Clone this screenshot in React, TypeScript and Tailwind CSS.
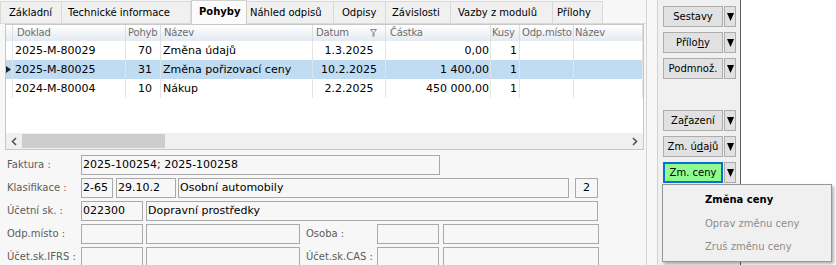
import React from "react";

type Col = { w: number; h?: string; hpl: number; align: "left" | "right" | "center"; pl?: number; pr?: number; key?: string };

const cols: Col[] = [
  { w: 7, hpl: 0, align: "left" },
  { w: 113, h: "Doklad", hpl: 4, align: "left", pl: 2, key: "doklad" },
  { w: 35, h: "Pohyb", hpl: 2, align: "right", pr: 8, key: "pohyb" },
  { w: 152, h: "Název", hpl: 3, align: "left", pl: 2, key: "nazev" },
  { w: 73, h: "Datum", hpl: 3, align: "center", key: "datum" },
  { w: 105, h: "Částka", hpl: 4, align: "right", pr: 1, key: "castka" },
  { w: 29, h: "Kusy", hpl: 1, align: "right", pr: 2, key: "kusy" },
  { w: 54, h: "Odp.místo", hpl: 2, align: "left", key: "odp" },
  { w: 69, h: "Název", hpl: 1, align: "left", key: "n2" },
];

const rows: Record<string, string>[] = [
  { doklad: "2025-M-80029", pohyb: "70", nazev: "Změna údajů", datum: "1.3.2025", castka: "0,00", kusy: "1" },
  { doklad: "2025-M-80025", pohyb: "31", nazev: "Změna pořizovací ceny", datum: "10.2.2025", castka: "1 400,00", kusy: "1", sel: "1" },
  { doklad: "2024-M-80004", pohyb: "10", nazev: "Nákup", datum: "2.2.2025", castka: "450 000,00", kusy: "1" },
];

const tabs = [
  { t: "Základní", w: 62, pl: 8 },
  { t: "Technické informace", w: 129, pl: 6 },
  { t: "Pohyby", w: 56, pl: 7, sel: true },
  { t: "Náhled odpisů", w: 87, pl: 3 },
  { t: "Odpisy", w: 52, pl: 8 },
  { t: "Závislosti", w: 65, pl: 6 },
  { t: "Vazby z modulů", w: 102, pl: 7 },
  { t: "Přílohy", w: 50, pl: 4 },
];

function Arrow() {
  return (
    <div className="w-[12px] h-[21px] border border-[#adadad] bg-[#e1e1e1] flex items-center justify-center">
      <svg width="7" height="8" viewBox="0 0 7 8">
        <polygon points="0,0 7,0 3.5,8" fill="#000" />
      </svg>
    </div>
  );
}

function Btn({ children, green }: { children: React.ReactNode; green?: boolean }) {
  return (
    <div className="flex gap-[1px]">
      <div
        className={
          green
            ? "w-[60px] h-[21px] border-2 border-[#0a70d4] bg-[#90fc90] flex items-center justify-center text-[10px] text-black"
            : "w-[60px] h-[21px] border border-[#adadad] bg-[#e1e1e1] flex items-center justify-center text-[10px] text-black"
        }
      >
        {children}
      </div>
      <Arrow />
    </div>
  );
}

function Box({ w, children, center }: { w: number; children?: React.ReactNode; center?: boolean }) {
  return (
    <div
      className={
        "h-[20px] border border-[#a9a9a9] bg-[#f7f7f7] text-[11px] leading-[18px] text-black whitespace-nowrap overflow-hidden shrink-0 " +
        (center ? "text-center" : "pl-[1px]")
      }
      style={{ width: w }}
    >
      {children}
    </div>
  );
}

function Label({ children, w = 81, pl = 7 }: { children: React.ReactNode; w?: number; pl?: number }) {
  return (
    <div className="text-[10px] text-[#5c5c5c] leading-[20px] whitespace-nowrap shrink-0" style={{ width: w, paddingLeft: pl }}>
      {children}
    </div>
  );
}

export default function App() {
  return (
    <div className="relative flex w-[836px] h-[265px] overflow-hidden bg-white font-['DejaVu_Sans',sans-serif]">
      {/* left area */}
      <div className="w-[657px] h-full bg-[#f7f7f7] flex shrink-0">
        <div className="w-[647px] h-full border-r border-[#d5d5d5] flex flex-col">
          {/* tabs */}
          <div className="h-[24px] flex items-end border-b border-[#d9d9d9] shrink-0">
            {tabs.map((t, i) =>
              t.sel ? (
                <div
                  key={i}
                  className="relative z-10 h-[24px] -mb-px bg-[#fbfbfb] border-x border-t border-[#d0d0d0] text-[10px] font-bold text-black leading-[22px] whitespace-nowrap"
                  style={{ width: t.w, paddingLeft: t.pl }}
                >
                  {t.t}
                </div>
              ) : (
                <div
                  key={i}
                  className={
                    "h-[22px] bg-[#f0f0f0] border-t border-r border-[#d9d9d9] text-[10px] text-black leading-[21px] whitespace-nowrap " +
                    (i === 0 ? "border-l" : "")
                  }
                  style={{ width: t.w, paddingLeft: t.pl }}
                >
                  {t.t}
                </div>
              )
            )}
          </div>

          {/* grid */}
          <div className="ml-[5px] w-[639px] h-[126px] border border-[#c8c8c8] bg-white flex flex-col shrink-0">
            <div className="h-[16px] flex bg-gradient-to-b from-white to-[#e4eaf1]">
              {cols.map((c, i) => (
                <div
                  key={i}
                  className="h-full border-r border-[#d8dde4] text-[10px] text-[#6e6e6e] leading-[16px] whitespace-nowrap overflow-hidden relative tracking-[-0.2px]"
                  style={{ width: c.w, paddingLeft: c.hpl }}
                >
                  {c.h}
                  {c.h === "Datum" && (
                    <svg className="absolute right-[8px] top-[4px]" width="7" height="8" viewBox="0 0 7 8">
                      <path d="M0.5 0.5 H6.5 L4 3.5 V7 L3 7.5 V3.5 Z" fill="none" stroke="#8a8a8a" strokeWidth="1" />
                    </svg>
                  )}
                </div>
              ))}
            </div>
            <div className="h-[92px] flex flex-col">
              {rows.map((r, ri) => (
                <div key={ri} className={"h-[19px] flex " + (r.sel ? "bg-[#c0dcf3]" : "")}>
                  {cols.map((c, i) => (
                    <div
                      key={i}
                      className={
                        "h-full border-r border-[#e4e4e4] text-[11px] leading-[19px] text-black whitespace-nowrap overflow-hidden " +
                        (c.align === "right" ? "text-right" : c.align === "center" ? "text-center" : "text-left")
                      }
                      style={{ width: c.w, paddingLeft: c.pl, paddingRight: c.pr }}
                    >
                      {i === 0 ? (
                        r.sel ? (
                          <svg width="5" height="7" viewBox="0 0 5 7" className="mt-[6px] ml-[0px]">
                            <polygon points="0,0 5,3.5 0,7" fill="#222" />
                          </svg>
                        ) : null
                      ) : c.key ? (
                        r[c.key] || ""
                      ) : (
                        ""
                      )}
                    </div>
                  ))}
                </div>
              ))}
            </div>
            {/* scrollbar */}
            <div className="h-[16px] flex items-center bg-[#f0f0f0]">
              <div className="w-[16px] h-full flex items-center justify-center">
                <svg width="6" height="9" viewBox="0 0 6 9">
                  <path d="M5 1 L1.5 4.5 L5 8" fill="none" stroke="#555" strokeWidth="1.6" />
                </svg>
              </div>
              <div className="w-[143px] h-[14px] bg-[#cdcdcd]" />
              <div className="flex-1" />
              <div className="w-[16px] h-full flex items-center justify-center">
                <svg width="6" height="9" viewBox="0 0 6 9">
                  <path d="M1 1 L4.5 4.5 L1 8" fill="none" stroke="#555" strokeWidth="1.6" />
                </svg>
              </div>
            </div>
          </div>

          {/* form */}
          <div className="mt-[5px] flex flex-col gap-[3px]">
            <div className="flex items-center">
              <Label>Faktura :</Label>
              <Box w={359}>2025-100254; 2025-100258</Box>
            </div>
            <div className="flex items-center">
              <Label>Klasifikace :</Label>
              <Box w={32}>2-65</Box>
              <div className="w-[3px]" />
              <Box w={60}>29.10.2</Box>
              <div className="w-[2px]" />
              <Box w={391}>Osobní automobily</Box>
              <div className="w-[6px]" />
              <Box w={23} center>2</Box>
            </div>
            <div className="flex items-center">
              <Label>Účetní sk. :</Label>
              <Box w={62}>022300</Box>
              <div className="w-[3px]" />
              <Box w={452}>Dopravní prostředky</Box>
            </div>
            <div className="flex items-center">
              <Label>Odp.místo :</Label>
              <Box w={62} />
              <div className="w-[3px]" />
              <Box w={154} />
              <Label w={77} pl={6}>Osoba :</Label>
              <Box w={62} />
              <div className="w-[4px]" />
              <Box w={156} />
            </div>
            <div className="flex items-center">
              <Label>Účet.sk.IFRS :</Label>
              <Box w={62} />
              <div className="w-[3px]" />
              <Box w={154} />
              <Label w={77} pl={6}>Účet.sk.CAS :</Label>
              <Box w={62} />
              <div className="w-[4px]" />
              <Box w={156} />
            </div>
          </div>
        </div>
      </div>

      {/* right button panel */}
      <div className="w-[84px] h-full bg-[#f0f0f0] border-l border-r border-l-[#d2d2d2] border-r-[#5f5f5f] flex flex-col pt-[6px] pl-[5px] gap-[5px] shrink-0">
        <Btn>Sestavy</Btn>
        <Btn>
          <span>
            Přílo<u>h</u>y
          </span>
        </Btn>
        <Btn>Podmnož.</Btn>
        <div className="mt-[26px]">
          <Btn>
            <span>
              Za<u>ř</u>azení
            </span>
          </Btn>
        </div>
        <Btn>
          <span>
            Zm. ú<u>d</u>ajů
          </span>
        </Btn>
        <Btn green>Zm. ceny</Btn>
      </div>

      <div className="flex-1 bg-white" />

      {/* dropdown menu */}
      <div className="absolute left-[662px] top-[184px] w-[170px] h-[78px] bg-[#f0f0f0] border border-[#979797] shadow-[2px_2px_3px_rgba(0,0,0,0.3)] flex flex-col pt-[3px]">
        <div className="h-[24px] leading-[24px] pl-[42px] text-[10px] font-bold text-black">Změna ceny</div>
        <div className="h-[23px] leading-[23px] pl-[42px] text-[10px] text-[#8c8c8c]">Oprav změnu ceny</div>
        <div className="h-[23px] leading-[23px] pl-[42px] text-[10px] text-[#8c8c8c]">Zruš změnu ceny</div>
      </div>
    </div>
  );
}
